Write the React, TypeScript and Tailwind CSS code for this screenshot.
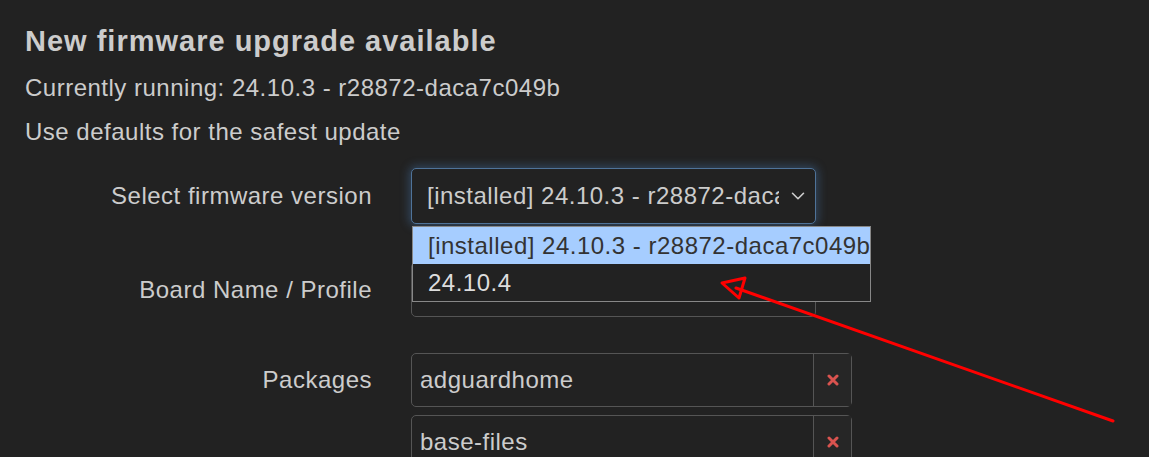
import { ChevronDown } from "lucide-react"

const font = { fontFamily: '"Liberation Sans", Arial, sans-serif' }

const PackageRow = ({ name }: { name: string }) => (
  <div className="flex h-[54px] w-[441px] rounded-[5px] border border-[#555] bg-[#222]">
    <div className="flex flex-1 items-center pl-[8px] text-[24px] tracking-[0.5px] text-[#ccc]">{name}</div>
    <div className="flex w-[38px] items-center justify-center border-l border-[#555] bg-[#262626]">
      <svg width="12" height="12" viewBox="0 0 12 12">
        <path d="M2 2 L10 10 M10 2 L2 10" stroke="#d9534f" strokeWidth="3" strokeLinecap="round" />
      </svg>
    </div>
  </div>
)

const App = () => {
  return (
    <div className="relative h-[457px] w-[1149px] overflow-hidden bg-[#222] text-[#ccc]" style={font}>
      <div className="pl-[25px] pt-[24px]">
        <h1 className="text-[29px] leading-[34px] font-bold tracking-[1px] text-[#ccc]">New firmware upgrade available</h1>
        <p className="mt-[15px] text-[24px] leading-[30px] tracking-[0.5px]">Currently running: 24.10.3 - r28872-daca7c049b</p>
        <p className="mt-[14px] text-[24px] leading-[30px] tracking-[0.5px]">Use defaults for the safest update</p>
      </div>

      <div className="mt-[21px] flex flex-col text-[24px] tracking-[0.5px]">
        <div className="flex items-center">
          <label className="w-[372px] text-right">Select firmware version</label>
          <div className="ml-[39px] flex h-[56px] w-[405px] items-center justify-between overflow-hidden rounded-[5px] border border-[#4f7399] bg-[#222] pr-[6px] pl-[15px] shadow-[0_0_10px_2px_rgba(80,140,210,0.35)]">
            <span className="w-[352px] overflow-hidden whitespace-nowrap">[installed] 24.10.3 - r28872-daca7c049b</span>
            <ChevronDown size={22} strokeWidth={1.75} className="text-[#ccc]" />
          </div>
        </div>

        <div className="mt-[38px] flex items-center">
          <label className="w-[372px] text-right">Board Name / Profile</label>
          <div className="ml-[39px] h-[55px] w-[405px] rounded-[5px] border border-[#555] bg-[#222]" />
        </div>

        <div className="mt-[36px] flex items-start">
          <label className="flex h-[54px] w-[372px] items-center justify-end">Packages</label>
          <div className="ml-[39px] flex flex-col gap-[8px]">
            <PackageRow name="adguardhome" />
            <PackageRow name="base-files" />
          </div>
        </div>
      </div>

      <div className="absolute top-[226px] left-[412px] w-[459px] border border-[#888] bg-[#222] text-[24px] tracking-[0.5px]">
        <div className="flex h-[37px] items-center overflow-hidden whitespace-nowrap bg-[#a6cdff] pl-[15px] text-[#333]">
          [installed] 24.10.3 - r28872-daca7c049b
        </div>
        <div className="flex h-[37px] items-center pl-[15px] text-[#ddd]">24.10.4</div>
      </div>

      <svg className="absolute top-0 left-0" width="1149" height="457">
        <line x1="1113" y1="421" x2="736" y2="288" stroke="#f00" strokeWidth="3" strokeLinecap="round" />
        <polygon points="722,283 745,278 739,298" fill="none" stroke="#f00" strokeWidth="3" strokeLinejoin="round" />
      </svg>
    </div>
  )
}

export default App
